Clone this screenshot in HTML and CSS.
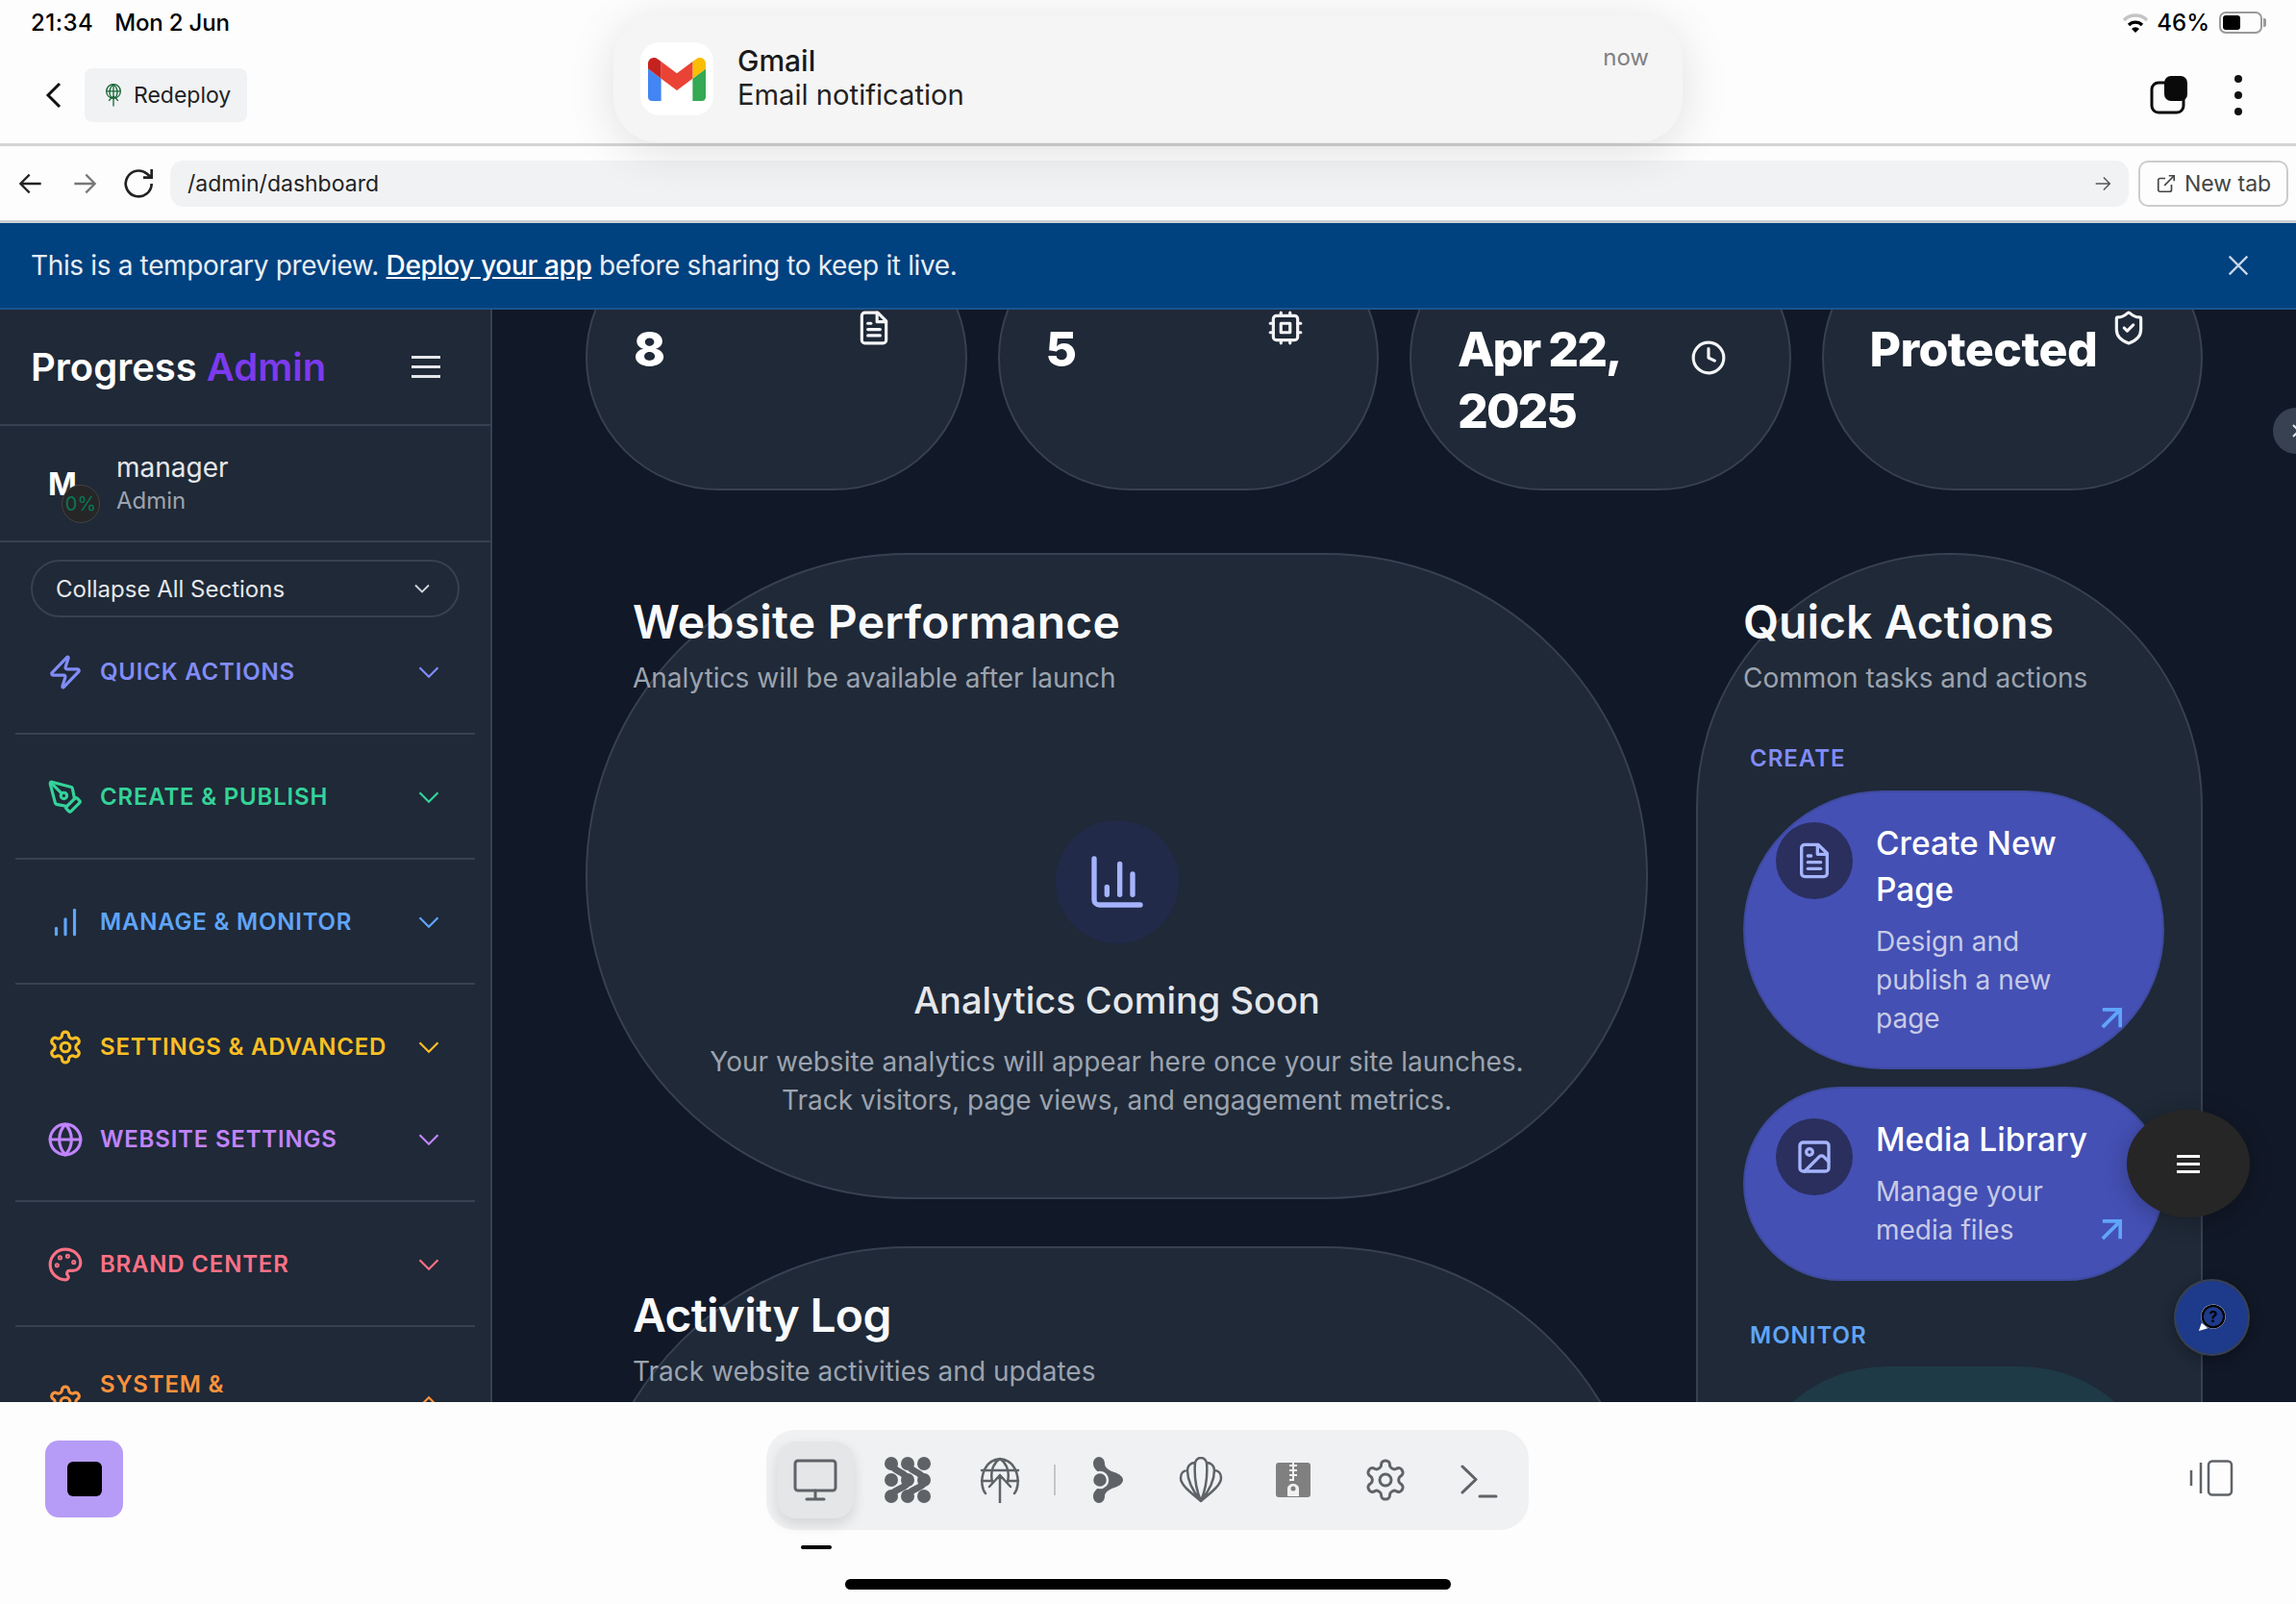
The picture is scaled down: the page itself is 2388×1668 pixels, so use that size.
FILE: index.html
```html
<!DOCTYPE html>
<html lang="en">
<head>
    <meta charset="UTF-8">
    <meta name="viewport" content="width=device-width, initial-scale=1.0">
    <title>Progress Admin</title>
    <link rel="stylesheet" href="styles.css">
</head>
<body>
    <svg class="sprite" xmlns="http://www.w3.org/2000/svg">
        <symbol id="i-chev" viewBox="0 0 24 24"><path d="m6 9 6 6 6-6"/></symbol>
        <symbol id="i-file" viewBox="0 0 24 24"><path d="M14.5 2H6a2 2 0 0 0-2 2v16a2 2 0 0 0 2 2h12a2 2 0 0 0 2-2V7.5L14.5 2z"/><path d="M14 2v6h6"/><path d="M16 13H8"/><path d="M16 17H8"/><path d="M10 9H8"/></symbol>
        <symbol id="i-cog" viewBox="0 0 24 24"><path d="M12.22 2h-.44a2 2 0 0 0-2 2v.18a2 2 0 0 1-1 1.73l-.43.25a2 2 0 0 1-2 0l-.15-.08a2 2 0 0 0-2.73.73l-.22.38a2 2 0 0 0 .73 2.73l.15.1a2 2 0 0 1 1 1.72v.51a2 2 0 0 1-1 1.74l-.15.09a2 2 0 0 0-.73 2.73l.22.38a2 2 0 0 0 2.73.73l.15-.08a2 2 0 0 1 2 0l.43.25a2 2 0 0 1 1 1.73V20a2 2 0 0 0 2 2h.44a2 2 0 0 0 2-2v-.18a2 2 0 0 1 1-1.73l.43-.25a2 2 0 0 1 2 0l.15.08a2 2 0 0 0 2.73-.73l.22-.39a2 2 0 0 0-.73-2.73l-.15-.08a2 2 0 0 1-1-1.74v-.5a2 2 0 0 1 1-1.74l.15-.09a2 2 0 0 0 .73-2.73l-.22-.38a2 2 0 0 0-2.73-.73l-.15.08a2 2 0 0 1-2 0l-.43-.25a2 2 0 0 1-1-1.73V4a2 2 0 0 0-2-2z"/><circle cx="12" cy="12" r="3"/></symbol>
    </svg>

    <header class="topbar">
        <div class="status">
            <span class="status-time">21:34</span>
            <span class="status-date">Mon 2 Jun</span>
            <span class="status-right">
                <svg class="wifi" viewBox="0 0 28 20"><path d="M2 7a17 17 0 0 1 24 0" stroke="#c4c4c4" stroke-width="3.4" fill="none"/><path d="M7 12a10 10 0 0 1 14 0" stroke="#000" stroke-width="3.4" fill="none"/><path d="m14 20-4-4a5.6 5.6 0 0 1 8 0z" fill="#000"/></svg>
                <span class="status-batt">46%</span>
                <span class="battery"><span class="battery-level"></span></span>
            </span>
        </div>
        <div class="toolbar">
            <svg class="tool-back" viewBox="0 0 24 32"><path d="M18 4 6 16l12 12"/></svg>
            <div class="redeploy">
                <svg viewBox="0 0 24 32" class="redeploy-icon"><circle cx="12" cy="11" r="9"/><path d="M3 11h18M12 2v28M12 2c-6 5-6 12-3 17M12 2c6 5 6 12 3 17M6 23l6-6 6 6"/></svg>
                <span>Redeploy</span>
            </div>
            <div class="toolbar-right">
                <svg class="tabs-icon" viewBox="0 0 40 40"><rect x="2" y="7" width="33" height="31" rx="7" fill="none" stroke="#0a0a0a" stroke-width="3"/><rect x="15" y="0" width="24" height="26" rx="7" fill="#0a0a0a"/></svg>
                <span class="dots"><i></i><i></i><i></i></span>
            </div>
        </div>
    </header>

    <div class="urlbar">
        <svg class="nav-icon" viewBox="0 0 24 24"><path d="M20 12H4M11 5l-7 7 7 7"/></svg>
        <svg class="nav-icon dim" viewBox="0 0 24 24"><path d="M4 12h16M13 5l7 7-7 7"/></svg>
        <svg class="nav-icon reload" viewBox="0 0 24 24"><path d="M20 12a8.5 8.5 0 1 1-3-6.5L20 8M20 2.500V8h-5.500"/></svg>
        <div class="urlfield">
            <span>/admin/dashboard</span>
            <svg class="url-go" viewBox="0 0 24 24"><path d="M4 12h16M13 5l7 7-7 7"/></svg>
        </div>
        <div class="newtab">
            <svg viewBox="0 0 24 24"><path d="M15 3h6v6"/><path d="M10 14 21 3"/><path d="M18 13v6a2 2 0 0 1-2 2H5a2 2 0 0 1-2-2V8a2 2 0 0 1 2-2h6"/></svg>
            <span>New tab</span>
        </div>
    </div>

    <div class="banner">
        <p>This is a temporary preview. <a href="#">Deploy your app</a> before sharing to keep it live.</p>
        <svg viewBox="0 0 24 24"><path d="M5 5l14 14M19 5 5 19"/></svg>
    </div>

    <div class="app">
        <aside class="sidebar">
            <div class="side-head">
                <div class="logo">Progress <span>Admin</span></div>
                <span class="burger"><i></i><i></i><i></i></span>
            </div>
            <div class="user">
                <div class="avatar">M<span class="avatar-badge">0%</span></div>
                <div>
                    <div class="user-name">manager</div>
                    <div class="user-role">Admin</div>
                </div>
            </div>
            <div class="collapse-wrap">
                <div class="collapse-btn">
                    <span>Collapse All Sections</span>
                    <svg viewBox="0 0 24 24"><use href="#i-chev"/></svg>
                </div>
            </div>
            <nav class="nav">
                <div class="nav-section">
                    <div class="nav-row c-indigo">
                        <svg class="nav-ic" viewBox="0 0 24 24"><path d="M4 14a1 1 0 0 1-.78-1.630l9.900-10.200a.5.5 0 0 1 .86.460l-1.920 6.020A1 1 0 0 0 13 10h7a1 1 0 0 1 .78 1.630l-9.900 10.200a.5.5 0 0 1-.86-.46l1.920-6.020A1 1 0 0 0 11 14z"/></svg>
                        <span class="nav-label">QUICK ACTIONS</span>
                        <svg class="nav-chev" viewBox="0 0 24 24"><use href="#i-chev"/></svg>
                    </div>
                </div>
                <div class="nav-section">
                    <div class="nav-row c-green">
                        <svg class="nav-ic" viewBox="0 0 24 24"><path d="M15.707 21.293a1 1 0 0 1-1.414 0l-1.586-1.586a1 1 0 0 1 0-1.414l5.586-5.586a1 1 0 0 1 1.414 0l1.586 1.586a1 1 0 0 1 0 1.414z"/><path d="m18 13-1.375-6.874a1 1 0 0 0-.746-.776L3.235 2.028a1 1 0 0 0-1.207 1.207L5.350 15.879a1 1 0 0 0 .776.746L13 18"/><path d="m2.300 2.300 7.286 7.286"/><circle cx="11" cy="11" r="2"/></svg>
                        <span class="nav-label">CREATE &amp; PUBLISH</span>
                        <svg class="nav-chev" viewBox="0 0 24 24"><use href="#i-chev"/></svg>
                    </div>
                </div>
                <div class="nav-section">
                    <div class="nav-row c-blue">
                        <svg class="nav-ic" viewBox="0 0 24 24"><path d="M18 20V4"/><path d="M12 20V10"/><path d="M6 20v-4"/></svg>
                        <span class="nav-label">MANAGE &amp; MONITOR</span>
                        <svg class="nav-chev" viewBox="0 0 24 24"><use href="#i-chev"/></svg>
                    </div>
                </div>
                <div class="nav-section">
                    <div class="nav-row c-amber">
                        <svg class="nav-ic" viewBox="0 0 24 24"><use href="#i-cog"/></svg>
                        <span class="nav-label">SETTINGS &amp; ADVANCED</span>
                        <svg class="nav-chev" viewBox="0 0 24 24"><use href="#i-chev"/></svg>
                    </div>
                    <div class="nav-row c-purple">
                        <svg class="nav-ic" viewBox="0 0 24 24"><circle cx="12" cy="12" r="10"/><path d="M12 2a14.500 14.500 0 0 0 0 20 14.500 14.500 0 0 0 0-20"/><path d="M2 12h20"/></svg>
                        <span class="nav-label">WEBSITE SETTINGS</span>
                        <svg class="nav-chev" viewBox="0 0 24 24"><use href="#i-chev"/></svg>
                    </div>
                </div>
                <div class="nav-section">
                    <div class="nav-row c-rose">
                        <svg class="nav-ic" viewBox="0 0 24 24"><path d="M12 22a1 1 0 0 1 0-20 10 9 0 0 1 10 9 5 5 0 0 1-5 5h-2.250a1.750 1.750 0 0 0-1.400 2.800l.3.4a1.750 1.750 0 0 1-1.400 2.800z"/><circle cx="13.500" cy="6.500" r=".6"/><circle cx="17.500" cy="10.500" r=".6"/><circle cx="6.500" cy="12.500" r=".6"/><circle cx="8.500" cy="7.500" r=".6"/></svg>
                        <span class="nav-label">BRAND CENTER</span>
                        <svg class="nav-chev" viewBox="0 0 24 24"><use href="#i-chev"/></svg>
                    </div>
                </div>
                <div class="nav-section">
                    <div class="nav-row nav-row-tall c-orange">
                        <svg class="nav-ic" viewBox="0 0 24 24"><use href="#i-cog"/></svg>
                        <span class="nav-label">SYSTEM &amp; ADMINISTRATION</span>
                        <svg class="nav-chev up" viewBox="0 0 24 24"><use href="#i-chev"/></svg>
                    </div>
                </div>
            </nav>
        </aside>

        <main class="main">
            <section class="stats">
                <div class="stat">
                    <div class="stat-value">8</div>
                    <svg class="stat-icon" viewBox="0 0 24 24"><use href="#i-file"/></svg>
                </div>
                <div class="stat">
                    <div class="stat-value">5</div>
                    <svg class="stat-icon" viewBox="0 0 24 24"><rect x="4" y="4" width="16" height="16" rx="2"/><rect x="9" y="9" width="6" height="6"/><path d="M15 2v2M15 20v2M2 15h2M2 9h2M20 15h2M20 9h2M9 2v2M9 20v2"/></svg>
                </div>
                <div class="stat stat-date">
                    <div class="stat-value">Apr 22, 2025</div>
                    <svg class="stat-icon" viewBox="0 0 24 24"><circle cx="12" cy="12" r="10"/><path d="M12 6v6l4 2"/></svg>
                </div>
                <div class="stat stat-shield">
                    <div class="stat-value">Protected</div>
                    <svg class="stat-icon" viewBox="0 0 24 24"><path d="M20 13c0 5-3.500 7.500-7.660 8.950a1 1 0 0 1-.67-.01C7.500 20.500 4 18 4 13V6a1 1 0 0 1 1-1c2 0 4.500-1.200 6.240-2.720a1.170 1.170 0 0 1 1.520 0C14.510 3.810 17 5 19 5a1 1 0 0 1 1 1z"/><path d="m9 12 2 2 4-4"/></svg>
                </div>
            </section>

            <div class="columns">
                <div class="col-left">
                    <section class="card card-perf">
                        <h2 class="card-title">Website Performance</h2>
                        <p class="card-sub">Analytics will be available after launch</p>
                        <div class="soon">
                            <div class="soon-circle">
                                <svg viewBox="0 0 24 24"><path d="M3 3v16a2 2 0 0 0 2 2h16"/><path d="M8 17v-3"/><path d="M13 17V5"/><path d="M18 17V9"/></svg>
                            </div>
                            <h3 class="soon-title">Analytics Coming Soon</h3>
                            <p class="soon-text">Your website analytics will appear here once your site launches.<br>Track visitors, page views, and engagement metrics.</p>
                        </div>
                    </section>
                    <section class="card card-log">
                        <h2 class="card-title">Activity Log</h2>
                        <p class="card-sub">Track website activities and updates</p>
                    </section>
                </div>

                <section class="card card-quick">
                    <h2 class="card-title">Quick Actions</h2>
                    <p class="card-sub">Common tasks and actions</p>
                    <div class="group-label c-indigo first">CREATE</div>
                    <div class="action">
                        <div class="action-icon">
                            <svg viewBox="0 0 24 24"><use href="#i-file"/></svg>
                        </div>
                        <div class="action-text">
                            <div class="action-title">Create New Page</div>
                            <div class="action-desc">Design and publish a new page</div>
                        </div>
                        <svg class="action-arrow" viewBox="6 6 12 12"><path d="M7 7h10v10"/><path d="M7 17 17 7"/></svg>
                    </div>
                    <div class="action">
                        <div class="action-icon">
                            <svg viewBox="0 0 24 24"><rect x="3" y="3" width="18" height="18" rx="2"/><circle cx="9" cy="9" r="2"/><path d="m21 15-3.086-3.086a2 2 0 0 0-2.828 0L6 21"/></svg>
                        </div>
                        <div class="action-text">
                            <div class="action-title">Media Library</div>
                            <div class="action-desc">Manage your media files</div>
                        </div>
                        <svg class="action-arrow" viewBox="6 6 12 12"><path d="M7 7h10v10"/><path d="M7 17 17 7"/></svg>
                    </div>
                    <div class="group-label c-blue">MONITOR</div>
                    <div class="action action-teal"></div>
                </section>
            </div>

            <div class="scroll-handle"><svg viewBox="0 0 24 24"><path d="m9 6 6 6-6 6"/></svg></div>
            <div class="fab fab-menu"><span class="fab-lines"><i></i><i></i><i></i></span></div>
            <div class="fab fab-help">
                <svg viewBox="0 0 32 32"><circle cx="17" cy="15" r="13.500" fill="#fff"/><path d="M1 31l3-9 7 6z" fill="#fff"/><circle cx="17" cy="15" r="12" fill="#1e3a8a" stroke="#000" stroke-width="2.500"/><text x="17" y="21" text-anchor="middle" class="fab-q">?</text></svg>
            </div>
        </main>
    </div>

    <footer class="dock-bar">
        <div class="stop-btn"><span></span></div>
        <div class="dock-mid">
            <div class="dock">
                <div class="dock-item active">
                    <svg viewBox="0 0 48 48" class="line"><rect x="3" y="4" width="42" height="31" rx="3"/><path d="M24 35v8M15 44h18"/></svg>
                </div>
                <div class="dock-item">
                    <svg viewBox="0 0 48 48" class="fill">
                        <circle cx="7" cy="7" r="7"/><circle cx="24" cy="7" r="7"/><circle cx="41" cy="7" r="7"/>
                        <circle cx="7" cy="24" r="7"/><circle cx="24" cy="24" r="7"/><circle cx="41" cy="24" r="7"/>
                        <circle cx="7" cy="41" r="7"/><circle cx="24" cy="41" r="7"/><circle cx="41" cy="41" r="7"/>
                        <path d="M7 7c2 9 15 8 17 17s-15 8-17 17M24 7c2 9 15 8 17 17s-15 8-17 17" fill="none" stroke="#5f6368" stroke-width="7"/>
                    </svg>
                </div>
                <div class="dock-item">
                    <svg viewBox="0 0 48 48" class="line thin"><path d="M9 38C2 30 4 4 24 2c20 2 22 28 15 36M24 2c-8 5-10 15-8 24M24 2c8 5 10 15 8 24M5 14h38M5 25h11M32 25h11M24 48V19M13 31l11-12 11 12"/></svg>
                </div>
                <span class="dock-sep"></span>
                <div class="dock-item">
                    <svg viewBox="0 0 48 48" class="fill"><path d="M14 0c3.300 0 6 3 6 7 0 4 4 7 10 9 6 2 9 5 9 8s-3 6-9 8c-6 2-10 5-10 9 0 4-2.700 7-6 7s-6-3-6-7c0-5 4-8 7-10V17c-3-2-7-5-7-10 0-4 2.700-7 6-7z"/><circle cx="15" cy="24" r="8" stroke="#f0f1f3" stroke-width="2.500"/></svg>
                </div>
                <div class="dock-item">
                    <svg viewBox="0 0 48 48" class="line thin"><path d="M24 46C16 39 3 30 3 22c0-5 3-8 7-8 0-5 4-8 8-8 1-3 3-5 6-5s5 2 6 5c4 0 8 3 8 8 4 0 7 3 7 8 0 8-13 17-21 24zM24 46C19 34 17 18 18 6M24 46c5-12 7-28 6-40M24 46C16 36 10 25 10 14M24 46c8-10 14-21 14-32"/></svg>
                </div>
                <div class="dock-item">
                    <svg viewBox="0 0 48 48" class="zip"><rect x="6" y="6" width="36" height="36" rx="3" fill="#808080"/><path d="M24 6v17M20 9h8M20 14h8M20 19h8M20 24h5" stroke="#f0f1f3" stroke-width="2" fill="none"/><path d="M18 41v-8c0-3 3-5 6-5s6 2 6 5v8z" fill="#f0f1f3"/><circle cx="24" cy="33" r="2.500" fill="#808080"/></svg>
                </div>
                <div class="dock-item">
                    <svg viewBox="0 0 24 24" class="line gear"><use href="#i-cog"/></svg>
                </div>
                <div class="dock-item">
                    <svg viewBox="0 0 48 48" class="line"><path d="M8 10l14 13.500L8 37M26 41h17"/></svg>
                </div>
            </div>
            <span class="dock-marker"></span>
        </div>
        <svg class="panel-toggle" viewBox="0 0 46 38"><rect x="20" y="1.500" width="24" height="35" rx="4"/><path d="M12 3v32M2 11v16"/></svg>
        <span class="home-bar"></span>
    </footer>

    <div class="notif">
        <div class="notif-app">
            <svg viewBox="52 42 88 66"><path fill="#4285f4" d="M58 108h14V74L52 59v43c0 3.320 2.690 6 6 6"/><path fill="#34a853" d="M120 108h14c3.320 0 6-2.690 6-6V59l-20 15"/><path fill="#fbbc04" d="M120 48v26l20-15v-8c0-7.420-8.470-11.650-14.400-7.200"/><path fill="#ea4335" d="M72 74V48l24 18 24-18v26L96 92"/><path fill="#c5221f" d="M52 51v8l20 15V48l-5.600-4.200c-5.940-4.450-14.400-.22-14.400 7.200"/></svg>
        </div>
        <div class="notif-text">
            <div class="notif-title">Gmail</div>
            <div class="notif-body">Email notification</div>
        </div>
        <span class="notif-time">now</span>
    </div>
</body>
</html>
```

FILE: styles.css
```css
* {
    box-sizing: border-box;
}
html, body {
    margin: 0;
    padding: 0;
}
body {
    width: 2388px;
    height: 1668px;
    overflow: hidden;
    position: relative;
    display: flex;
    flex-direction: column;
    font-family: Inter, "Liberation Sans", sans-serif;
    background-color: #fdfdfd;
    color: #111;
}
h2, h3, p {
    margin: 0;
}
.sprite {
    display: none;
}

/* tablet + browser chrome */
.topbar {
    height: 152px;
    background-color: #fdfdfd;
    border-bottom: 3px solid #d4d4d4;
    padding: 0 32px;
}
.status {
    height: 47px;
    display: flex;
    align-items: center;
    font-size: 24px;
    font-weight: 500;
    color: #000;
}
.status-time {
    margin-right: 22px;
    letter-spacing: 0.5px;
}
.status-date {
    letter-spacing: -0.2px;
}
.status-right {
    margin-left: auto;
    margin-right: 3px;
    display: flex;
    align-items: center;
}
.wifi {
    width: 28px;
    height: 20px;
    margin-right: 8px;
}
.status-batt {
    margin-right: 10px;
}
.battery {
    width: 45px;
    height: 23px;
    border: 2px solid #9a9a9a;
    border-radius: 7px;
    padding: 2px;
    display: block;
    position: relative;
}
.battery::after {
    content: "";
    position: absolute;
    right: -6px;
    top: 5px;
    width: 3px;
    height: 9px;
    background-color: #9a9a9a;
    border-radius: 0 2px 2px 0;
}
.battery-level {
    display: block;
    width: 18px;
    height: 100%;
    background-color: #000;
    border-radius: 3px;
}
.toolbar {
    height: 56px;
    margin-top: 24px;
    display: flex;
    align-items: center;
}
.tool-back {
    width: 24px;
    height: 32px;
    margin-left: 12px;
    margin-right: 20px;
    fill: none;
    stroke: #111;
    stroke-width: 3;
}
.redeploy {
    width: 169px;
    height: 56px;
    border-radius: 8px;
    background-color: #f1f2f4;
    display: flex;
    align-items: center;
    padding-left: 20px;
    font-size: 23px;
    color: #222;
}
.redeploy-icon {
    width: 20px;
    height: 26px;
    margin-right: 11px;
    fill: none;
    stroke: #166534;
    stroke-width: 1.6;
}
.toolbar-right {
    margin-left: auto;
    margin-right: 20px;
    display: flex;
    align-items: center;
}
.tabs-icon {
    width: 40px;
    height: 40px;
    margin-right: 48px;
}
.dots {
    display: flex;
    flex-direction: column;
    gap: 9px;
    margin-right: 4px;
}
.dots i {
    width: 8px;
    height: 8px;
    border-radius: 50%;
    background-color: #111;
}
.urlbar {
    height: 80px;
    background-color: #fdfdfd;
    border-bottom: 3px solid #ccd0d5;
    padding: 13px 8px 13px 16px;
    display: flex;
    align-items: center;
}
.nav-icon {
    width: 32px;
    height: 32px;
    margin-right: 24px;
    fill: none;
    stroke: #222;
    stroke-width: 1.7;
}
.nav-icon.dim {
    stroke: #777;
    margin-right: 22px;
}
.nav-icon.reload {
    width: 38px;
    height: 38px;
    margin-right: 13px;
}
.urlfield {
    flex: 1;
    height: 48px;
    background-color: #f1f2f4;
    border-radius: 14px;
    display: flex;
    align-items: center;
    justify-content: space-between;
    padding: 0 16px 0 18px;
    font-size: 23px;
    color: #222;
}
.url-go {
    width: 22px;
    height: 22px;
    fill: none;
    stroke: #555;
    stroke-width: 1.6;
}
.newtab {
    width: 156px;
    height: 48px;
    margin-left: 10px;
    border: 2px solid #ccc;
    border-radius: 10px;
    display: flex;
    align-items: center;
    justify-content: center;
    gap: 8px;
    font-size: 23px;
    color: #444;
}
.newtab svg {
    width: 22px;
    height: 22px;
    fill: none;
    stroke: #444;
    stroke-width: 1.8;
}
.banner {
    height: 90px;
    background-color: #00417f;
    border-bottom: 2px solid #1a5490;
    padding: 0 44px 0 32px;
    display: flex;
    align-items: center;
    justify-content: space-between;
    color: #e8eef6;
    font-size: 28px;
    letter-spacing: -0.35px;
}
.banner a {
    color: #fff;
    font-weight: 500;
}
.banner svg {
    width: 32px;
    height: 32px;
    fill: none;
    stroke: #c8d6e8;
    stroke-width: 1.7;
}

/* app */
.app {
    height: 1136px;
    display: flex;
    overflow: hidden;
    position: relative;
    background-color: #111827;
}
.sidebar {
    width: 512px;
    flex-shrink: 0;
    background-color: #1f2937;
    border-right: 2px solid #374151;
    overflow: hidden;
}
.side-head {
    height: 121px;
    border-bottom: 2px solid #374151;
    padding: 0 52px 0 32px;
    display: flex;
    align-items: center;
    justify-content: space-between;
}
.logo {
    font-size: 40px;
    font-weight: 600;
    color: #fff;
}
.logo span {
    color: #7c3aed;
}
.burger {
    display: flex;
    flex-direction: column;
    gap: 7px;
}
.burger i {
    width: 30px;
    height: 3px;
    background-color: #e5e7eb;
}
.user {
    height: 121px;
    border-bottom: 2px solid #374151;
    padding-left: 50px;
    display: flex;
    align-items: center;
    gap: 17px;
}
.avatar {
    width: 54px;
    height: 60px;
    font-size: 32px;
    font-weight: 700;
    color: #fff;
    position: relative;
    line-height: 62px;
}
.avatar-badge {
    position: absolute;
    left: 14px;
    top: 31px;
    width: 40px;
    height: 40px;
    border-radius: 50%;
    background-color: #262626;
    border: 1px solid #444;
    color: #047857;
    font-size: 20px;
    font-weight: 400;
    line-height: 38px;
    text-align: center;
}
.user-name {
    font-size: 28px;
    line-height: 36px;
    color: #e5e7eb;
}
.user-role {
    font-size: 24px;
    line-height: 34px;
    color: #9ca3af;
}
.collapse-wrap {
    padding: 18px 32px 0;
}
.collapse-btn {
    height: 60px;
    border: 2px solid #374151;
    border-radius: 30px;
    padding: 0 23px 0 24px;
    display: flex;
    align-items: center;
    justify-content: space-between;
    font-size: 24px;
    color: #e5e7eb;
}
.collapse-btn svg {
    width: 28px;
    height: 28px;
    fill: none;
    stroke: #d1d5db;
    stroke-width: 1.6;
}
.nav {
    margin-top: -8px;
}
.nav-section {
    margin: 0 16px;
    padding: 34px 0 32px;
    border-bottom: 2px solid #374151;
    display: flex;
    flex-direction: column;
    gap: 34px;
}
.nav-row {
    min-height: 62px;
    padding: 0 34px;
    display: flex;
    align-items: center;
    color: var(--c);
}
.nav-row-tall {
    min-height: 88px;
}
.nav-ic {
    width: 38px;
    height: 38px;
    margin-left: -1px;
    margin-right: 17px;
    flex-shrink: 0;
    fill: none;
    stroke: var(--c);
    stroke-width: 2;
    stroke-linecap: round;
    stroke-linejoin: round;
}
.nav-label {
    flex: 1;
    font-size: 24px;
    line-height: 36px;
    font-weight: 600;
    letter-spacing: 0.8px;
}
.nav-chev {
    width: 38px;
    height: 38px;
    fill: none;
    stroke: var(--c);
    stroke-width: 1.4;
    flex-shrink: 0;
    margin-right: -5px;
}
.nav-chev.up {
    transform: rotate(180deg);
}
.c-indigo { --c: #818cf8; color: #818cf8; }
.c-green { --c: #34d399; }
.c-blue { --c: #60a5fa; color: #60a5fa; }
.c-amber { --c: #fbbf24; }
.c-purple { --c: #c084fc; }
.c-rose { --c: #fb7185; }
.c-orange { --c: #fb923c; }

.main {
    flex: 1;
    padding: 0 97px;
    min-width: 0;
}
.stats {
    margin-top: -88px;
    display: grid;
    grid-template-columns: repeat(4, 1fr);
    gap: 32px;
}
.stat {
    height: 276px;
    background-color: #1f2937;
    border: 2px solid #374151;
    border-radius: 9999px;
    padding: 95px 50px 0 48px;
    display: flex;
    align-items: flex-start;
    justify-content: space-between;
}
.stat-value {
    font-size: 50px;
    line-height: 64px;
    font-weight: 800;
    color: #fff;
    letter-spacing: -0.6px;
}
.stat-date .stat-value {
    width: 190px;
    letter-spacing: -2px;
}
.stat-icon {
    width: 38px;
    height: 38px;
    flex-shrink: 0;
    margin-top: -9px;
    margin-right: 26px;
    fill: none;
    stroke: #f3f4f6;
    stroke-width: 2;
    stroke-linecap: round;
    stroke-linejoin: round;
}
.stat-date .stat-icon {
    margin-top: 22px;
    margin-right: 15px;
}
.stat-shield .stat-icon {
    margin-right: 6px;
}
.columns {
    margin-top: 65px;
    display: grid;
    grid-template-columns: 1105px 527px;
    gap: 50px;
}
.col-left {
    display: flex;
    flex-direction: column;
    gap: 49px;
}
.card {
    background-color: #1f2937;
    border: 2px solid #374151;
    border-radius: 9999px;
    padding: 42px 38px 0 47px;
}
.card-perf {
    height: 672px;
}
.card-log {
    height: 672px;
}
.card-quick {
    height: 1300px;
}
.card-title {
    font-size: 48px;
    line-height: 56px;
    font-weight: 600;
    color: #f9fafb;
}
.card-perf .card-title {
    letter-spacing: 0.25px;
}
.card-log .card-title {
    letter-spacing: -0.7px;
}
.card-sub {
    margin-top: 10px;
    font-size: 28px;
    line-height: 40px;
    color: #9ca3af;
}
.soon {
    margin-top: 128px;
    text-align: center;
    margin-right: 9px;
}
.soon-circle {
    width: 128px;
    height: 128px;
    margin: 0 auto;
    border-radius: 50%;
    background-color: #222a4a;
    display: flex;
    align-items: center;
    justify-content: center;
}
.soon-circle svg {
    width: 64px;
    height: 64px;
    fill: none;
    stroke: #a5b4fc;
    stroke-width: 2;
    stroke-linecap: round;
}
.soon-title {
    margin-top: 37px;
    font-size: 38px;
    line-height: 44px;
    font-weight: 500;
    color: #e5e7eb;
}
.soon-text {
    margin-top: 22px;
    font-size: 28px;
    line-height: 40px;
    color: #9ca3af;
}
.group-label {
    margin-top: 41px;
    font-size: 24px;
    line-height: 32px;
    font-weight: 600;
    letter-spacing: 1px;
    padding-left: 7px;
}
.group-label.first {
    margin-top: 48px;
}
.action {
    margin-top: 17px;
    background-color: #4450b4;
    border: 2px solid #3f4a9e;
    border-radius: 9999px;
    padding: 29px 32px 31px;
    display: flex;
    align-items: flex-start;
}
.action + .action {
    margin-top: 18px;
}
.action-icon {
    width: 80px;
    height: 80px;
    border-radius: 50%;
    background-color: #2a2f5e;
    flex-shrink: 0;
    margin-right: 24px;
    margin-top: 2px;
    display: flex;
    align-items: center;
    justify-content: center;
}
.action-icon svg {
    width: 40px;
    height: 40px;
    fill: none;
    stroke: #a5b4fc;
    stroke-width: 2;
    stroke-linecap: round;
    stroke-linejoin: round;
}
.action-text {
    flex: 1;
    min-width: 0;
}
.action-title {
    font-size: 33.5px;
    line-height: 48px;
    font-weight: 500;
    color: #fff;
}
.action-desc {
    margin-top: 10px;
    font-size: 28px;
    line-height: 40px;
    color: #c7cbe6;
}
.action-arrow {
    width: 22px;
    height: 22px;
    flex-shrink: 0;
    align-self: flex-end;
    margin-bottom: 9px;
    margin-left: 4px;
    margin-right: 10px;
    fill: none;
    stroke: #60a5fa;
    stroke-width: 2;
}
.action-teal {
    height: 300px;
    margin-top: 16px;
    background-color: #1f3a47;
    border-color: #1f3a47;
}

/* things that float over the page */
.scroll-handle {
    position: absolute;
    right: -24px;
    top: 102px;
    width: 48px;
    height: 48px;
    border-radius: 50%;
    background-color: #374151;
    display: flex;
    align-items: center;
    justify-content: flex-start;
    padding-left: 12px;
}
.scroll-handle svg {
    width: 24px;
    height: 24px;
    fill: none;
    stroke: #e5e7eb;
    stroke-width: 2;
    flex-shrink: 0;
}
.fab {
    position: absolute;
    border-radius: 50%;
    display: flex;
    align-items: center;
    justify-content: center;
}
.fab-menu {
    left: 2212px;
    top: 832px;
    width: 128px;
    height: 112px;
    background-color: #262626;
    box-shadow: 0 4px 24px rgba(0, 0, 0, 0.25);
}
.fab-lines {
    display: flex;
    flex-direction: column;
    gap: 5px;
}
.fab-lines i {
    width: 24px;
    height: 3px;
    background-color: #fff;
}
.fab-help {
    left: 2261px;
    top: 1008px;
    width: 79px;
    height: 80px;
    background-color: #1e3a8a;
    border: 2px solid #374151;
    box-shadow: 0 4px 14px rgba(0, 0, 0, 0.3);
}
.fab-help svg {
    width: 30px;
    height: 30px;
}
.fab-q {
    font-size: 17px;
    font-weight: 700;
    fill: #000;
}

/* bottom dock */
.dock-bar {
    flex: 1;
    background-color: #fdfdfd;
    display: flex;
    align-items: flex-start;
    position: relative;
    padding: 29px 65px 0 47px;
}
.stop-btn {
    width: 81px;
    height: 80px;
    margin-top: 11px;
    border-radius: 14px;
    background-color: #b69cf6;
    display: flex;
    align-items: center;
    justify-content: center;
}
.stop-btn span {
    width: 36px;
    height: 36px;
    border-radius: 6px;
    background-color: #000;
}
.dock-mid {
    margin-left: 669px;
    width: 793px;
}
.dock {
    height: 104px;
    border-radius: 30px;
    background-color: #f0f1f3;
    padding: 0 11px;
    display: flex;
    align-items: center;
    gap: 16px;
}
.dock-item {
    width: 80px;
    height: 80px;
    flex-shrink: 0;
    border-radius: 20px;
    display: flex;
    align-items: center;
    justify-content: center;
}
.dock-item.active {
    background-color: #e5e6e8;
    box-shadow: 0 6px 14px rgba(0, 0, 0, 0.12);
}
.dock-item svg {
    width: 48px;
    height: 48px;
}
.dock-item .fill {
    fill: #5f6368;
}
.dock-item .line {
    fill: none;
    stroke: #5f6368;
    stroke-width: 3;
    stroke-linecap: round;
    stroke-linejoin: round;
}
.dock-item .line.thin {
    stroke-width: 2.500;
}
.dock-item .line.gear {
    stroke-width: 1.500;
}
.dock-sep {
    width: 2px;
    height: 32px;
    margin: 0 -1px 0 0;
    flex-shrink: 0;
    background-color: #c4c6c9;
}
.dock-marker {
    display: block;
    width: 32px;
    height: 4px;
    margin: 16px 0 0 36px;
    background-color: #000;
    border-radius: 2px;
}
.panel-toggle {
    width: 46px;
    height: 38px;
    margin-left: auto;
    margin-top: 31px;
    fill: none;
    stroke: #5f6368;
    stroke-width: 2.500;
}
.home-bar {
    position: absolute;
    left: 879px;
    top: 184px;
    width: 630px;
    height: 11px;
    border-radius: 6px;
    background-color: #000;
}

/* notification over the top bar */
.notif {
    position: absolute;
    left: 638px;
    top: 16px;
    width: 1112px;
    height: 132px;
    background-color: #f5f5f5;
    border-radius: 46px;
    box-shadow: 0 8px 50px rgba(0, 0, 0, 0.12);
    display: flex;
    align-items: center;
    padding: 0 35px 0 28px;
}
.notif-app {
    width: 76px;
    height: 76px;
    background-color: #fff;
    border-radius: 20px;
    display: flex;
    align-items: center;
    justify-content: center;
}
.notif-app svg {
    width: 60px;
    height: 45px;
}
.notif-text {
    margin-left: 25px;
    margin-top: -2px;
    flex: 1;
}
.notif-title {
    font-size: 30px;
    line-height: 36px;
    font-weight: 500;
    color: #1a1a1a;
}
.notif-body {
    font-size: 29.2px;
    line-height: 36px;
    color: #222;
}
.notif-time {
    align-self: flex-start;
    margin-top: 29px;
    font-size: 24px;
    line-height: 30px;
    color: #808080;
}
```
